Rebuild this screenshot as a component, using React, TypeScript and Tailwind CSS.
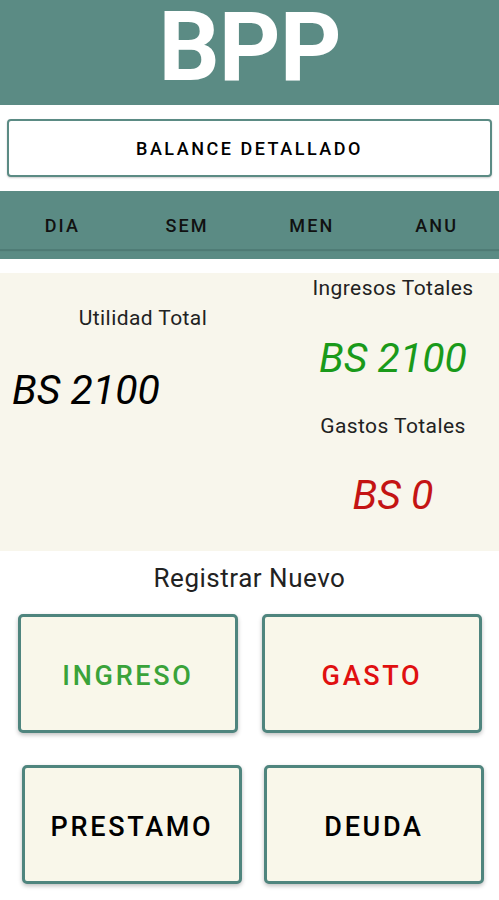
import React, { useState } from "react";

const tabs = ["DIA", "SEM", "MEN", "ANU"];

function Tile({ label, color }: { label: string; color: string }) {
  return (
    <button
      className={`h-[119px] w-[220px] pt-[5px] rounded-[5px] border-[3px] border-[#4f857e] bg-[#f9f7ea] shadow-[0_2px_4px_rgba(0,0,0,0.25)] text-[27px] font-medium tracking-[0.1em] ${color}`}
    >
      {label}
    </button>
  );
}

export default function App() {
  const [tab, setTab] = useState("DIA");

  return (
    <div className="w-[499px] h-[900px] bg-white overflow-hidden font-['Roboto',sans-serif]">
      {/* header */}
      <div className="h-[105px] bg-[#5b8b84] flex justify-center">
        <span className="text-white font-bold text-[96px] leading-[95px] tracking-[-0.01em]">BPP</span>
      </div>

      <div className="px-[7px] pt-[14px]">
        <button className="w-full h-[58px] bg-white border-2 border-[#5b8b84] rounded-[4px] shadow-[0_1px_2px_rgba(0,0,0,0.2)] text-[18px] font-medium tracking-[0.14em] text-black">
          BALANCE DETALLADO
        </button>
      </div>

      {/* tabs */}
      <div className="mt-[14px] h-[68px] bg-[#5b8b84]">
        <div className="h-[59px] grid grid-cols-4 border-b border-[#4f7c76] shadow-[0_1px_1px_rgba(0,0,0,0.12)]">
          {tabs.map((t) => (
            <button
              key={t}
              onClick={() => setTab(t)}
              className="flex items-center justify-center pt-[10px] text-[18px] font-medium tracking-[0.12em] text-[#111]"
            >
              {t}
            </button>
          ))}
        </div>
      </div>

      {/* summary */}
      <div className="mt-[14px] h-[278px] bg-[#f8f6ec] flex">
        <div className="w-[250px] flex flex-col">
          <div className="mt-[30px] pl-[36px] text-center text-[21px] tracking-[0.02em] text-[#222]">Utilidad Total</div>
          <div className="mt-[25px] pl-[12px] text-[41px] italic text-black">BS 2100</div>
        </div>
        <div className="flex-1 flex flex-col items-center pl-[37px]">
          <div className="mt-0 text-[21px] tracking-[0.02em] text-[#222]">Ingresos Totales</div>
          <div className="mt-[23px] text-[41px] italic text-[#1a9a1a]">BS 2100</div>
          <div className="mt-[22px] text-[21px] tracking-[0.02em] text-[#222]">Gastos Totales</div>
          <div className="mt-[22px] text-[41px] italic text-[#c41414]">BS 0</div>
        </div>
      </div>

      {/* registrar */}
      <div className="mt-[8px] text-center text-[26px] tracking-[0.02em] text-[#222]">Registrar Nuevo</div>
      <div className="mt-[16px] flex gap-[24px] pl-[18px]">
        <Tile label="INGRESO" color="text-[#3aa33a]" />
        <Tile label="GASTO" color="text-[#e01010]" />
      </div>
      <div className="mt-[32px] flex gap-[22px] pl-[22px]">
        <Tile label="PRESTAMO" color="text-black" />
        <Tile label="DEUDA" color="text-black" />
      </div>
    </div>
  );
}
